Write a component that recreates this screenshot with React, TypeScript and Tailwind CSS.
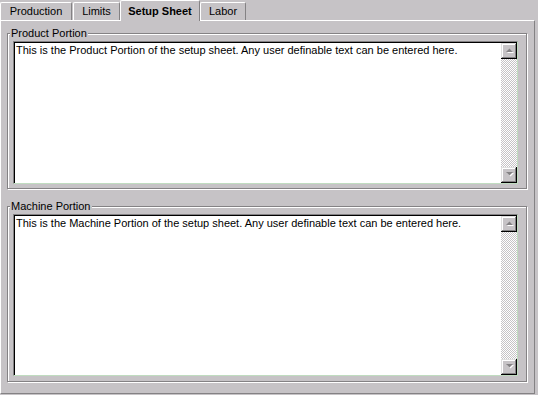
import React from "react";

const productText =
  "This is the Product Portion of the setup sheet. Any user definable text can be entered here.";
const machineText =
  "This is the Machine Portion of the setup sheet. Any user definable text can be entered here.";

export default function App() {
  return (
    <div className="w-[538px] h-[395px] overflow-hidden bg-[#c6c3c6] font-['Liberation_Sans',Arial,sans-serif] text-[11px] leading-[13px] text-black">
      <div className="flex h-[20px] items-end">
        <Tab label="Production" width="w-[72px]" />
        <Tab label="Limits" width="w-[47px] ml-[1px]" />
        <Tab label="Setup Sheet" width="w-[80px]" active />
        <Tab label="Labor" width="w-[46px]" />
      </div>

      <div className="h-[374px] w-[535px] border border-white border-r-[#848284] border-b-[#848284] pt-[12px]">
        <GroupBox label="Product Portion" height="h-[156px]" editHeight="h-[143px]" text={productText} />
        <GroupBox
          label="Machine Portion"
          height="h-[176px]"
          editHeight="h-[162px]"
          text={machineText}
          className="mt-[17px]"
        />
      </div>
    </div>
  );
}

type TabProps = {
  label: string;
  width: string;
  active?: boolean;
};
const Tab: React.FC<TabProps> = ({ label, width, active }) => {
  if (active) {
    return (
      <div
        className={`relative z-10 -mb-px h-[21px] ${width} rounded-tl-[2px] rounded-tr-[2px] border-t border-l border-r border-white border-r-[#848284] bg-[#c6c3c6] pt-[4px] text-center font-bold`}
      >
        {label}
      </div>
    );
  }
  return (
    <div
      className={`h-[18px] ${width} rounded-tl-[2px] rounded-tr-[2px] border-t border-l border-r border-white border-r-[#848284] pt-[2px] text-center`}
    >
      {label}
    </div>
  );
};

type GroupBoxProps = {
  label: string;
  height: string;
  editHeight: string;
  text: string;
  className?: string;
};
const GroupBox: React.FC<GroupBoxProps> = ({ label, height, editHeight, text, className = "" }) => {
  return (
    <div
      className={`relative ml-[6px] w-[520px] ${height} border border-[#848284] pt-[7px] pl-[5px] shadow-[inset_1px_1px_0_#ffffff,1px_1px_0_#ffffff] ${className}`}
    >
      <span className="absolute -top-[7px] left-[2px] bg-[#c6c3c6] px-[1px]">{label}</span>
      <div
        className={`flex w-[505px] ${editHeight} border-t border-l border-r border-b border-[#848284] border-r-[#c0dcc0] border-b-[#c0dcc0] shadow-[inset_1px_1px_0_#000000]`}
      >
        <div className="flex-1 bg-white pt-[2px] pl-[2px] shadow-[inset_1px_1px_0_#000000]">{text}</div>
        <ScrollBar />
      </div>
    </div>
  );
};

const ScrollBar = () => {
  return (
    <div className="flex w-[16px] flex-col pt-px">
      <ArrowButton />
      <div className="flex-1 bg-[image:repeating-conic-gradient(#c6c3c6_0_25%,#ffffff_0_50%)] bg-[length:2px_2px]" />
      <ArrowButton down />
    </div>
  );
};

const ArrowButton = ({ down }: { down?: boolean }) => {
  return (
    <div className="flex h-[16px] w-[16px] items-center justify-center bg-[#c6c3c6] shadow-[inset_-1px_-1px_0_#000000,inset_1px_1px_0_#dfdfdf,inset_-2px_-2px_0_#848284,inset_2px_2px_0_#ffffff]">
      <svg width="9" height="6" viewBox="0 0 9 6">
        {down ? (
          <>
            <polygon points="2,1 9,1 5.5,4.5" fill="#ffffff" />
            <polygon points="1,0 8,0 4.5,3.5" fill="#848284" />
          </>
        ) : (
          <>
            <polygon points="2,5 9,5 5.5,1.5" fill="#ffffff" />
            <polygon points="1,4 8,4 4.5,0.5" fill="#848284" />
          </>
        )}
      </svg>
    </div>
  );
};
